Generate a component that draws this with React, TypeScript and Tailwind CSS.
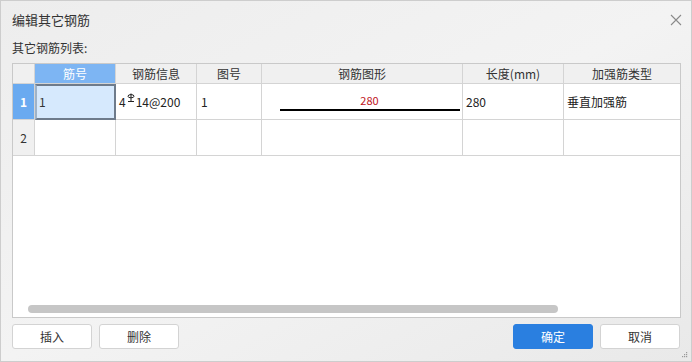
import React from "react";

const font = { fontFamily: '"Noto Sans CJK SC", "Microsoft YaHei", "Liberation Sans", sans-serif' };

function RebarSym() {
  return (
    <svg width="8" height="10" viewBox="0 0 8 10" className="inline-block relative -top-[4px] mx-[1px]">
      <path d="M4 0.5 V8.5" stroke="#222" strokeWidth="1" />
      <path d="M1 3.2 Q1 1.6 4 1.6 Q7 1.6 7 3.2 Q7 4.8 4 4.8 Q1 4.8 1 3.2 Z" stroke="#222" strokeWidth="1" fill="none" />
      <path d="M1 8.5 H7" stroke="#222" strokeWidth="1" />
    </svg>
  );
}

const cols = [22, 81, 81, 65, 201, 101, 116];
const headers = ["", "筋号", "钢筋信息", "图号", "钢筋图形", "长度(mm)", "加强筋类型"];

export default function App() {
  return (
    <div
      className="w-[692px] h-[362px] border border-[#cdcdcd] bg-gradient-to-br from-[#ededed] via-[#f3f3f3] to-[#e9e9e9] flex flex-col relative text-[#333] overflow-hidden"
      style={font}
    >
      {/* title */}
      <div className="h-[37px] flex items-center justify-between pl-[11px] pr-[9px] shrink-0">
        <span className="text-[13px] text-[#333]">编辑其它钢筋</span>
        <svg width="12" height="12" viewBox="0 0 12 12">
          <path d="M1 1 L11 11 M11 1 L1 11" stroke="#8a8a8a" strokeWidth="1.1" />
        </svg>
      </div>
      <div className="h-[20px] flex items-center pl-[11px] text-[12px] text-[#333] shrink-0">其它钢筋列表:</div>
      <div className="h-[5px] shrink-0" />
      {/* table */}
      <div className="ml-[11px] w-[669px] h-[255px] border border-[#c9c9c9] bg-white relative shrink-0">
        {/* header */}
        <div className="flex h-[20px]">
          {headers.map((h, i) => (
            <div
              key={i}
              style={{ width: cols[i] }}
              className={`h-full border-r border-b border-[#d4d4d4] flex items-center justify-center text-[12px] ${
                i === 1 ? "bg-[#7db5f3] text-white" : "bg-[#f0f0f0] text-[#333]"
              } ${i === 6 ? "border-r-0" : ""}`}
            >
              {h}
            </div>
          ))}
        </div>
        {/* row 1 */}
        <div className="flex h-[36px]">
          <div style={{ width: cols[0] }} className="h-full bg-[#6aaaf0] border-r border-b border-[#d4d4d4] flex items-center justify-center text-white font-bold text-[12px]">1</div>
          <div style={{ width: cols[1] }} className="h-full bg-[#d6e9fd] border-2 border-[#6e7b8b] border-l-[#9fb3c8] flex items-center pl-[2px] text-[12px]">1</div>
          <div style={{ width: cols[2] }} className="h-full border-r border-b border-[#d4d4d4] flex items-center pl-[3px] text-[12px] text-[#222]">
            4<RebarSym />14@200
          </div>
          <div style={{ width: cols[3] }} className="h-full border-r border-b border-[#d4d4d4] flex items-center pl-[4px] text-[12px] text-[#222]">1</div>
          <div style={{ width: cols[4] }} className="h-full border-r border-b border-[#d4d4d4] flex flex-col items-center justify-center pl-[15px]">
            <span className="text-[11px] leading-[12px] text-[#c0141c] pt-[2px]">280</span>
            <div className="mt-[3px] w-[180px] h-[2px] bg-black" />
          </div>
          <div style={{ width: cols[5] }} className="h-full border-r border-b border-[#d4d4d4] flex items-center pl-[3px] text-[12px] text-[#222]">280</div>
          <div style={{ width: cols[6] }} className="h-full border-b border-[#d4d4d4] flex items-center pl-[3px] text-[12px] text-[#222]">垂直加强筋</div>
        </div>
        {/* row 2 */}
        <div className="flex h-[36px]">
          {cols.map((w, i) => (
            <div
              key={i}
              style={{ width: w }}
              className={`h-full border-b border-[#d4d4d4] flex items-center justify-center text-[12px] ${
                i === 0 ? "bg-[#f0f0f0] text-[#333]" : ""
              } ${i === 6 ? "" : "border-r"}`}
            >
              {i === 0 ? "2" : ""}
            </div>
          ))}
        </div>
        {/* horizontal scrollbar */}
        <div className="absolute left-[15px] top-[241px] w-[530px] h-[8px] rounded-full bg-[#c6c6c6]" />
      </div>
      {/* buttons */}
      <div className="flex items-center pl-[11px] pr-[11px] mt-[6px] text-[12px]">
        <button className="w-[80px] h-[25px] bg-white border border-[#d3d3d3] rounded-[3px] text-[#333]">插入</button>
        <button className="ml-[7px] w-[80px] h-[25px] bg-white border border-[#d3d3d3] rounded-[3px] text-[#333]">删除</button>
        <div className="flex-1" />
        <button className="w-[80px] h-[25px] bg-[#2a7fe0] border border-[#2a7fe0] rounded-[3px] text-white">确定</button>
        <button className="ml-[7px] w-[80px] h-[25px] bg-white border border-[#d3d3d3] rounded-[3px] text-[#333]">取消</button>
      </div>
      {/* resize grip */}
      <svg width="6" height="6" viewBox="0 0 6 6" className="absolute right-[3px] bottom-[3px]">
        <rect x="4" y="0" width="1.2" height="1.2" fill="#999" />
        <rect x="2" y="2" width="1.2" height="1.2" fill="#999" />
        <rect x="4" y="2" width="1.2" height="1.2" fill="#999" />
        <rect x="0" y="4" width="1.2" height="1.2" fill="#999" />
        <rect x="2" y="4" width="1.2" height="1.2" fill="#999" />
        <rect x="4" y="4" width="1.2" height="1.2" fill="#999" />
      </svg>
    </div>
  );
}
